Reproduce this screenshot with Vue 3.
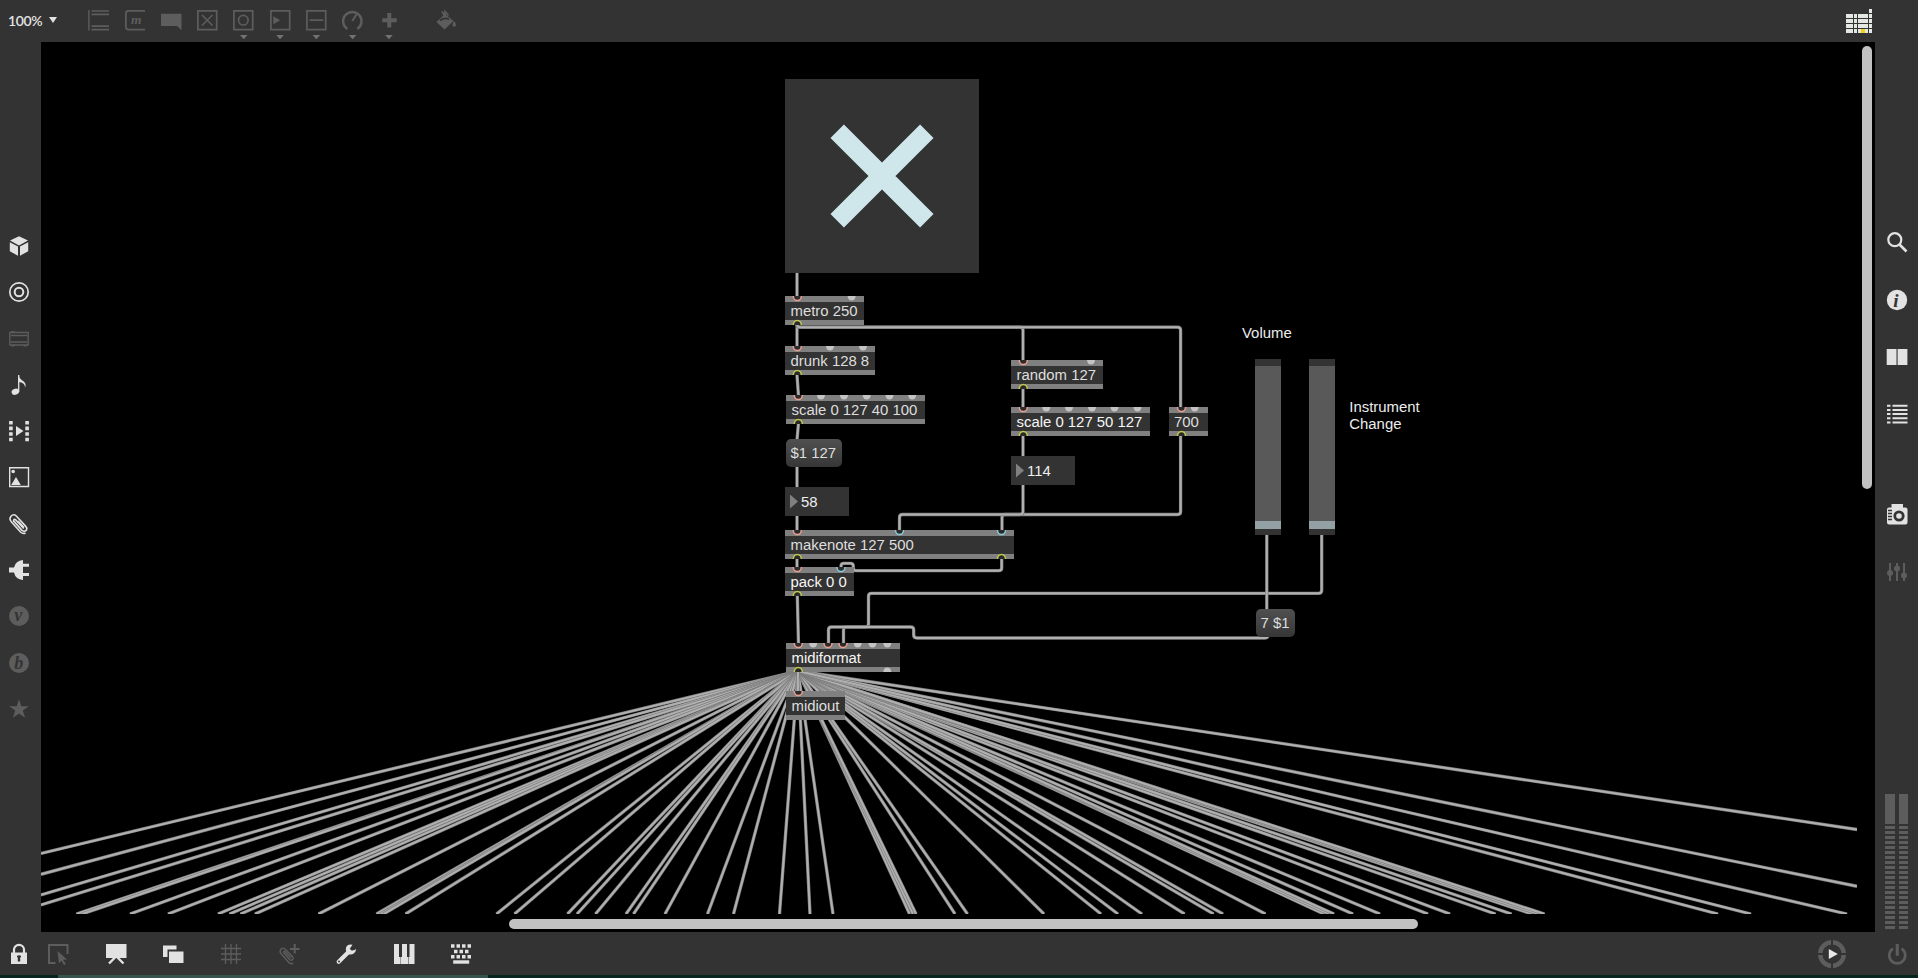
<script setup>
const topIcons = [
  { art: '<path d="M.9 0v20.500" stroke-width="1.400"/><path d="M3.500 1h17.500M3.500 4.300h17.500M3.500 16.200h17.500M3.500 19.600h17.500"/>' },
  { art: '<path d="M20 .9H3.500Q.9.9.9 3.500v13.500q0 2.600 2.600 2.600H20"/><text x="6" y="13.500" class="serif" font-size="13.500" stroke="none">m</text>' },
  { art: '<path class="solid" d="M0 3.800h20.500V20.200l-4.500-4.200H0z"/>' },
  { art: '<path d="M.9.9h18.800v18.800H.9zM5 5l10.500 10.500M15.500 5L5 15.500"/>' },
  { art: '<path d="M.9.9h18.800v18.800H.9z"/><circle cx="10.300" cy="10.200" r="4.800"/>', menu: true },
  { art: '<path d="M.9.9h18.800v18.800H.9z"/><path class="solid" d="M3.300 6.300l6.800 4-6.800 4z"/>', menu: true },
  { art: '<path d="M.9.9h18.800v18.800H.9zM3.500 10.200h13.700"/>', menu: true },
  { art: '<path stroke-width="2.400" d="M5.300 18.900A9.200 9.200 0 1 1 15.300 18.900"/><path stroke-width="2" d="M10.300 11l4-6.500"/>', menu: true },
  { art: '<path stroke-width="4" d="M3.200 10.200h14.500M10.300 3v14.500"/>', menu: true },
  { art: '<path class="solid" d="M.5 12L9 4l8.500 7-9 8.500z"/><path d="M6 1.500l2.500 4M9 5V1.500l3.500 4"/><path stroke="#333" d="M4 10.500q5-3.500 9-1"/><path class="solid" d="M18.200 11q3.600 5 0 5.800-3.600-.8 0-5.800z"/>', gap: true },
]

const leftIcons = [
  { art: '<path class="solid" d="M10 .2l9 4.400-9 4.800-9-4.800zM.8 6.200l8.200 4.400v9.200L.8 15.300zM19.200 6.200L11 10.600v9.200l8.200-4.500z"/>' },
  { art: '<circle cx="10" cy="10" r="9.200"/><circle cx="10" cy="10" r="4.300" stroke-width="2"/>' },
  { art: '<path d="M.8 3.500h18.400v12.500H.8z" stroke-width="1.400"/><path d="M2 6.500h16M2 13h16" stroke-width="1.300"/><path class="solid" d="M2.500 2h3v2h-3zM2.500 16h3v1.500h-3zM14.500 16h3v1.500h-3z"/>', dim: true },
  { art: '<ellipse class="solid" cx="6.300" cy="16.800" rx="3.800" ry="3" transform="rotate(-20 6.300 16.800)"/><path stroke-width="1.300" d="M9.700 17V0"/><path class="solid" d="M9.500 0q.6 3.500 3.500 5.200 5.200 3 3 7.500.4-5-6.500-5.700z"/>' },
  { art: '<path stroke-width="3.600" stroke-dasharray="3.600 2" d="M1.900 0v20.300M18.100 0v20.300"/><path class="solid" d="M7 5l7.500 5L7 15z"/>' },
  { art: '<path stroke-width="1.400" d="M.7.7h18.800v18.800H.7z"/><circle class="solid" cx="4.200" cy="4.500" r="1.800"/><path class="solid" d="M2.200 18l4.800-8 4.800 8z"/>' },
  { art: '<path stroke-width="1.600" d="M14.800 14.500L6.500 5.700q-1.800-1-2 1.200l8.500 9.500q2.800 2 4.600-.6.800-1.700-.8-3.400L7.300 2Q4.500-.5 2 2.300q-2.200 3 .5 5.700l9 10q2.500 2.200 5 1"/><path stroke-width="1.600" d="M9 7l6 6.500"/>' },
  { art: '<path class="solid" d="M14 0v20Q6.500 19.500 5 12.500H0v-5h5Q6.500.5 14 0z"/><path stroke-width="3" d="M13 5.300h7M13 14.500h7"/>' },
  { art: '<circle class="solid" cx="10" cy="10" r="10"/><text x="5.300" y="15.200" class="serif knock" font-size="18">v</text>', dim: true },
  { art: '<circle class="solid" cx="10" cy="10" r="10"/><text x="5.300" y="16" class="serif knock" font-size="18">b</text>', dim: true },
  { art: '<path class="solid" d="M10 .2l2.300 7h7.500l-6 4.400 2.300 7.200-6.100-4.400-6.100 4.400 2.300-7.200-6-4.400h7.500z"/>', dim: true },
]

const rightIcons = [
  { art: '<circle cx="7.800" cy="7.700" r="6.500" stroke-width="2.200"/><path stroke-width="2.700" d="M12.500 12.500l7 7"/>' },
  { art: '<circle class="solid" cx="10" cy="10" r="10.200"/><text x="6.200" y="16.500" class="serif knock" font-size="19">i</text>' },
  { art: '<path class="solid" d="M-.3 2h9.800v16H-.3zM10.600 2h9.800v16h-9.800z"/>' },
  { art: '<path stroke-width="2" d="M0 1.700h3.500M5.500 1.700h15M0 5.900h3.500M5.500 5.900h15M0 10.100h3.500M5.500 10.100h15M0 14.300h3.500M5.500 14.300h15M0 18.500h3.500M5.500 18.500h15"/>' },
  { art: '<path class="solid" d="M4.500 0h11.500v3.500h2.500q2 0 2 2v13q0 2-2 2H2q-2 0-2-2v-13q0-2 2-2h2.500z"/><circle cx="12" cy="12" r="4.200" stroke="#333" stroke-width="2.800"/><path stroke="#333" stroke-width="1.400" d="M1 6.500h4M1 9.500h4M1 12.500h4M1 15.500h4"/>', gap: true },
  { art: '<path stroke-width="2" d="M3 1v18M10 1v18M17 1v18"/><circle class="solid" cx="3" cy="11" r="3"/><circle class="solid" cx="10" cy="6.500" r="3"/><circle class="solid" cx="17" cy="13.500" r="3"/>', dim: true },
]

const bottomIcons = [
  { art: '<path class="solid" d="M2 8.500h16V20H2z"/><path stroke-width="2.200" d="M5 9V5.500a5 4.700 0 0 1 10 0V9"/><path stroke="#333" stroke-width="2.400" d="M10 11.500v6"/><path stroke="#333" stroke-width="1.500" d="M8 12.500h4"/>', cls: 'lock' },
  { art: '<path stroke-width="2" d="M7.500 19H1V1h18.500v9"/><path class="solid" d="M9.500 7l9.500 8.500-4 .3 3 4.200-2 1-2.500-4.300-2.500 2.500z"/>', dim: true, cls: 'select' },
  { art: '<path class="solid" d="M0 0h20.500v14H0z"/><path stroke-width="2.400" d="M9.500 13l-6.500 6.500M11 13l6.500 6.500"/>' },
  { art: '<path class="solid" d="M0 1.500h13.500v4h-9V13H0z"/><path class="solid" d="M6 7.500h14.500v11.500H6z"/>' },
  { art: '<path stroke-width="1.300" d="M4.500 0v20M10 0v20M15.500 0v20M0 4.500h20M0 10h20M0 15.500h20"/>', dim: true },
  { art: '<path stroke-width="1.400" d="M12 14L6 7.500q-1.500-.8-1.500 1l6 7q2.200 1.600 3.500-.3.700-1.300-.8-2.900L6.500 5.500Q4 3 2 5.200q-2 2.300.3 4.800l7 8q2.500 2.800 5 1"/><path stroke-width="2" d="M11 5h9.500M15.700 0v9.500"/>', dim: true },
  { art: '<path stroke-width="4.200" stroke-linecap="round" d="M2.700 17.700L12 8.500"/><path class="solid" d="M16.500.7q-5-1.200-6.500 3-.6 2.600.5 4.500l2.600 2.200q5.500.7 7.200-5.200l-4.500 1.500-2-2z"/><circle cx="3" cy="17.400" r="1" class="solid knock"/>' },
  { art: '<path class="solid" d="M0 0h5v13h1.600v7H0zM8 0h5v13h1v7H7v-7h1zM15.500 0h5v20h-6v-7h1z"/>' },
  { art: '<path stroke-width="3.500" stroke-dasharray="3.500 2" d="M0 2h20.500M0 12.700h20.500"/><path stroke-width="3.500" stroke-dasharray="3.500 2" d="M3 7.400h15"/><path stroke-width="3.400" d="M2.200 18h16"/>' },
]

const H = 'hot', C = 'cold', G = 'idle', Y = 'out'
const nodes = [
  { text: 'metro 250', x: 785, y: 296, w: 79, ins: [[12.3, H], [66.6, G]], outs: [[12.3, Y]] },
  { text: 'drunk 128 8', x: 785, y: 346, w: 90, ins: [[12.3, H], [45, G], [78, G]], outs: [[12.3, Y]] },
  { text: 'scale 0 127 40 100', x: 786, y: 395, w: 139, ins: [[12.3, H], [35, G], [58, G], [80.7, G], [103.5, G], [126.2, G]], outs: [[12.3, Y]] },
  { text: 'makenote 127 500', x: 785, y: 530, w: 229, ins: [[12.3, H], [114.5, C], [216.5, C]], outs: [[12.3, Y], [216.5, Y]] },
  { text: 'pack 0 0', x: 785, y: 567, w: 69, bright: true, ins: [[12.3, H], [56, C]], outs: [[12.3, Y]] },
  { text: 'midiformat', x: 786, y: 643, w: 114, bright: true, ins: [[12.3, H], [27.2, G], [42, H], [57, H], [71.7, G], [86.5, G], [101.3, G]], outs: [[12.3, Y], [101.3, G]] },
  { text: 'midiout', x: 786, y: 691, w: 59, ins: [[12.3, H]], outs: [] },
  { text: 'random 127', x: 1011, y: 360, w: 92, ins: [[12.3, H], [80, G]], outs: [[12.3, Y]] },
  { text: 'scale 0 127 50 127', x: 1011, y: 407, w: 139, bright: true, ins: [[12.3, H], [35.3, G], [58, G], [81, G], [103.5, G], [126.5, G]], outs: [[12.3, Y]] },
  { text: '700', x: 1168.5, y: 407, w: 39, ins: [[12.5, H], [25.7, G]], outs: [[12.5, Y]] },
]
const messages = [
  { text: '$1 127', x: 785.5, y: 439, w: 56 },
  { text: '7 $1', x: 1255.5, y: 609, w: 39.5 },
]
const numbers = [
  { text: '58', x: 785, y: 487 },
  { text: '114', x: 1011, y: 456 },
]
const sliders = [{ x: 1254.6 }, { x: 1309.4 }]

const cords = [
  'M797 272V297', 'M797 324V347', 'M797 375L798.5 396', 'M798.5 423L797 440', 'M797 466V488', 'M797 516V531',
  'M797 558V568', 'M797.3 595L798.5 644', 'M1023 388V408', 'M1023 436V457',
  'M797 324Q797 327.2 800 327.2H1020Q1023 327.2 1023 330.2V361',
  'M797 324Q797 327.2 800 327.2H1177.5Q1180.6 327.2 1180.6 330.2V408',
  'M1180.6 436V511.500Q1180.6 514.500 1177.600 514.500H1005Q1002 514.500 1002 517.500V531',
  'M1023 485V511.500Q1023 514.500 1020 514.500H902.500Q899.500 514.500 899.500 517.500V531',
  'M1001.700 558V568Q1001.700 570.700 998.700 570.700H856Q853.300 570.700 853.300 568V566Q853.300 563.300 850.300 563.300H844Q841 563.300 841 566V568',
  'M1321.700 535V590Q1321.700 593.300 1318.700 593.300H871.500Q868.500 593.300 868.500 596.300V624Q868.500 627 865.500 627H846.500Q843.500 627 843.500 630V644',
  'M1266.800 535V610',
  'M1268 635Q1268 638 1265 638H917Q913.700 638 913.700 635V630Q913.700 627 910.700 627H831.500Q828.500 627 828.500 630V644',
  'M798 671V692',
]

const leftEdge = [853.5, 874.3, 894.9, 904.9]
const rightEdge = [829.5, 886.3]
const floor = [
  76.5, 82, 130, 168, 218, 229.5, 240.5, 255, 318.5, 376.5, 380.5, 383.5, 405.5, 496.5, 514.5, 567.5, 577, 595.5, 626, 633.5, 665, 707.5, 733.5, 779.5,
  810, 833, 909.6, 913, 916, 955, 967.5, 1044, 1101, 1118, 1142, 1184.6, 1213.6, 1223, 1265.5, 1324, 1329, 1334, 1353, 1380,
  1428, 1450, 1495.5, 1511.5, 1532, 1538.5, 1544.500, 1718, 1751, 1847,
]
const rays = [
  ...leftEdge.map((y) => `M798 671L41 ${y}`),
  ...rightEdge.map((y) => `M798 671L1857 ${y}`),
  ...floor.map((x) => `M798 671L${x} 914`),
]

const px = (n) => `${n}px`
const place = (n) => ({ left: px(n.x - 41), top: px(n.y - 42), width: n.w ? px(n.w) : undefined })
</script>

<template>
  <div class="app">
    <header class="top">
      <div class="zoom"><span>100%</span><i class="tri"></i></div>
      <div v-for="(ic, i) in topIcons" :key="i" class="tool" :class="{ gap: ic.gap }">
        <svg class="icon dim" viewBox="0 0 20.5 20.5" v-html="ic.art"></svg>
        <i v-if="ic.menu" class="tri small"></i>
      </div>
      <svg class="calendar" viewBox="0 0 26 24">
        <path d="M23 0h3v4h-3zM0 5h7v4H0zM8 5h3v4H8zM12 5h10v4H12zM23 5h3v4h-3zM0 10h7v4H0zM8 10h3v4H8zM12 10h10v4H12zM23 10h3v4h-3zM0 15h7v4H0zM8 15h3v4H8zM12 15h10v4H12zM23 15h3v4h-3zM0 20h7v4H0zM8 20h3v4H8zM12 20h10v4H12zM23 20h3v4h-3z" />
        <path class="yellow" d="M15 20h4v4h-4z" />
      </svg>
    </header>

    <div class="middle">
      <aside class="left">
        <svg v-for="(ic, i) in leftIcons" :key="i" class="icon" :class="{ dim: ic.dim }" viewBox="0 0 20 20" v-html="ic.art"></svg>
      </aside>

      <main class="canvas">
        <svg class="cords" width="1834" height="890" viewBox="41 42 1834 890">
          <defs>
            <clipPath id="patch"><rect x="41" y="42" width="1816" height="872" /></clipPath>
          </defs>
          <g clip-path="url(#patch)">
            <template v-for="(d, i) in rays" :key="'r' + i">
              <path class="edge" :d="d" /><path class="core" :d="d" />
            </template>
          </g>
          <template v-for="(d, i) in cords" :key="'c' + i">
            <path class="edge" :d="d" /><path class="core" :d="d" />
          </template>
        </svg>

        <svg class="toggle node" :style="place({ x: 785, y: 78.5 })" viewBox="0 0 194 194">
          <path d="M52.200 52.200l89.600 89.600M141.800 52.200l-89.600 89.600" />
        </svg>

        <div v-for="n in nodes" :key="n.text" class="node object" :class="{ bright: n.bright }" :style="place(n)">
          <span>{{ n.text }}</span>
          <svg class="ports" :width="n.w" height="29">
            <path v-for="(p, i) in n.ins" :key="'i' + i" :class="p[1]" :d="`M${p[0] - 4} 0a4 4.600 0 0 0 8 0`" />
            <path v-for="(p, i) in n.outs" :key="'o' + i" :class="p[1]" :d="`M${p[0] - 4} 29a4 4.600 0 0 1 8 0`" />
          </svg>
        </div>

        <div v-for="m in messages" :key="m.text" class="node message" :style="place(m)">{{ m.text }}</div>
        <div v-for="n in numbers" :key="n.text" class="node number" :style="place(n)"><i></i>{{ n.text }}</div>
        <div v-for="s in sliders" :key="s.x" class="node slider" :style="place({ x: s.x, y: 359.4 })"><i></i></div>

        <div class="node comment" :style="place({ x: 1242, y: 325.4 })">Volume</div>
        <div class="node comment" :style="place({ x: 1349.3, y: 399.4 })">Instrument<br />Change</div>

        <div class="vbar"></div>
        <div class="hbar"></div>
      </main>

      <aside class="right">
        <svg v-for="(ic, i) in rightIcons" :key="i" class="icon" :class="{ dim: ic.dim, gap: ic.gap }" viewBox="0 0 20 20" v-html="ic.art"></svg>
        <div class="meter">
          <div v-for="c in 2" :key="c" class="channel">
            <b></b><i v-for="s in 21" :key="s"></i>
          </div>
        </div>
      </aside>
    </div>

    <footer class="bottom">
      <svg v-for="(ic, i) in bottomIcons" :key="i" class="icon" :class="[{ dim: ic.dim }, ic.cls]" viewBox="0 0 20.5 20.5" v-html="ic.art"></svg>
      <svg class="play" viewBox="0 0 28 28">
        <circle cx="14" cy="14" r="11.800" />
        <path class="split" d="M14 0v28M0 14h28" />
        <circle class="hub" cx="14" cy="14" r="9.300" />
        <path class="arrow" d="M10.800 9l9 5-9 5z" />
      </svg>
      <svg class="icon dim power" viewBox="0 0 20 20">
        <path stroke-width="2.600" d="M5.800 4.500A7.800 7.800 0 1 0 14.200 4.500" />
        <path stroke-width="3" d="M10 0v11.500" />
      </svg>
    </footer>
    <div class="strip"><i></i></div>
  </div>
</template>

<style>
body {
  background: #333;
  overflow: hidden;
}
</style>

<style scoped>
.app {
  width: 1918px;
  height: 978px;
  display: flex;
  flex-direction: column;
  background: #333;
  color: #e2e2e2;
  font-family: "Liberation Sans", Arial, sans-serif;
}
.top {
  height: 42px;
  flex: none;
  display: flex;
  align-items: flex-start;
}
.zoom {
  width: 80.3px;
  padding: 12px 0 0 8px;
  font: 600 14px/18px Lato, sans-serif;
  letter-spacing: -0.4px;
  display: flex;
  box-sizing: content-box;
}
.zoom span {
  width: 41px;
}
.tri {
  width: 8px;
  height: 6px;
  margin-top: 5px;
  background: #e2e2e2;
  clip-path: polygon(0 0, 100% 0, 50% 100%);
}
.tri.small {
  height: 4.5px;
  margin-top: 4.300px;
  background: #727272;
}
.tool {
  width: 20.5px;
  margin: 10px 15.8px 0 0;
  display: flex;
  flex-direction: column;
  align-items: center;
}
.tool.gap {
  margin-left: 21px;
}
.icon {
  width: 20px;
  height: 20px;
  flex: none;
  overflow: visible;
  fill: none;
  stroke: currentColor;
  stroke-width: 1.7;
}
.top .icon,
.bottom .icon {
  width: 20.5px;
  height: 20.5px;
}
.dim {
  color: #5d5d5d;
}
.icon :deep(.solid) {
  fill: currentColor;
  stroke: none;
}
.icon :deep(.serif) {
  font-family: "Liberation Serif", serif;
  font-style: italic;
  font-weight: 700;
  fill: currentColor;
  stroke: none;
}
.icon :deep(.knock) {
  fill: #333;
}
.calendar {
  width: 26px;
  height: 24px;
  margin: 9px 46px 0 auto;
  fill: #e4e8e2;
}
.calendar .yellow {
  fill: #efd21c;
}
.middle {
  height: 890px;
  flex: none;
  display: flex;
}
.left {
  width: 41px;
  box-sizing: border-box;
  padding: 194px 0 0 9.3px;
  display: flex;
  flex-direction: column;
  gap: 26.3px;
}
.right {
  width: 43px;
  box-sizing: border-box;
  padding: 190.3px 0 3px 11.5px;
  display: flex;
  flex-direction: column;
  gap: 37.4px;
}
.right .gap {
  margin-top: 42.6px;
}
.meter {
  margin: auto 0 0 -1.5px;
  display: flex;
  gap: 4px;
}
.channel {
  width: 10px;
  display: flex;
  flex-direction: column;
  gap: 2px;
}
.channel + .channel {
  width: 9px;
}
.channel b {
  height: 30px;
  background: #5d5d5d;
}
.channel i {
  height: 3px;
  background: #5d5d5d;
}
.canvas {
  width: 1834px;
  position: relative;
  overflow: hidden;
  background: #000;
  font-size: 14.9px;
  color: #dedede;
}
.cords {
  display: block;
  fill: none;
}
.edge {
  stroke: #7c7c7c;
  stroke-width: 3.3;
}
.core {
  stroke: #b0b0b0;
  stroke-width: 2;
}
.node {
  position: absolute;
  box-sizing: border-box;
  white-space: nowrap;
}
.bright {
  color: #f6f6f6;
}
.toggle {
  width: 194px;
  height: 194px;
  background: #333;
  stroke: #cfe7ea;
  stroke-width: 19;
}
.object {
  height: 29px;
  border: solid #808080;
  border-width: 6px 0 5px;
  background: #333;
  padding-left: 5.5px;
  line-height: 19px;
}
.object span {
  display: block;
}
.ports {
  position: absolute;
  left: 0;
  top: -6px;
}
.hot,
.cold,
.out {
  fill: #2b2b2b;
  stroke-width: 1.5;
}
.hot {
  stroke: #eb9e90;
}
.cold {
  stroke: #86cbdc;
}
.out {
  stroke: #c2ca48;
}
.idle {
  fill: #c4c4c4;
}
.message {
  height: 28px;
  border-radius: 5px;
  padding-left: 5px;
  line-height: 28px;
  background: linear-gradient(#505050, #363636);
}
.number {
  width: 64px;
  height: 29px;
  background: #333;
  color: #eee;
  display: flex;
  align-items: center;
  gap: 3px;
  padding-left: 5px;
}
.number i {
  width: 8px;
  height: 14px;
  background: #808080;
  clip-path: polygon(0 0, 100% 50%, 0 100%);
}
.slider {
  width: 26px;
  height: 176px;
  background: #333;
  padding: 7px 0 6px;
}
.slider i {
  display: block;
  height: 163px;
  box-sizing: border-box;
  background: #595959;
  border-bottom: 8px solid #93a1a4;
}
.comment {
  line-height: 17px;
  color: #ececec;
}
.vbar {
  position: absolute;
  left: 1820.5px;
  top: 4px;
  width: 10.5px;
  height: 443px;
  border-radius: 5px;
  background: #c1c1c1;
}
.hbar {
  position: absolute;
  left: 468px;
  top: 877px;
  width: 909px;
  height: 10px;
  border-radius: 5px;
  background: #c1c1c1;
}
.bottom {
  height: 43px;
  flex: none;
  box-sizing: border-box;
  display: flex;
  align-items: center;
  gap: 37.1px;
  padding: 1px 0 0 8.6px;
}
.bottom .select {
  margin-left: -18px;
}
.play {
  width: 28px;
  height: 28px;
  margin-left: auto;
  fill: none;
  stroke: #5d5d5d;
  stroke-width: 4.5;
}
.play .split {
  stroke: #333;
  stroke-width: 2;
}
.play .hub {
  fill: #333;
  stroke: none;
}
.play .arrow {
  fill: #e8e8e8;
  stroke: none;
}
.bottom .power {
  margin: 0 11px 0 3px;
}
.strip {
  height: 3px;
  padding-left: 58px;
  background: #06251f;
}
.strip i {
  display: block;
  width: 430px;
  height: 3px;
  background: #36544d;
}
</style>
